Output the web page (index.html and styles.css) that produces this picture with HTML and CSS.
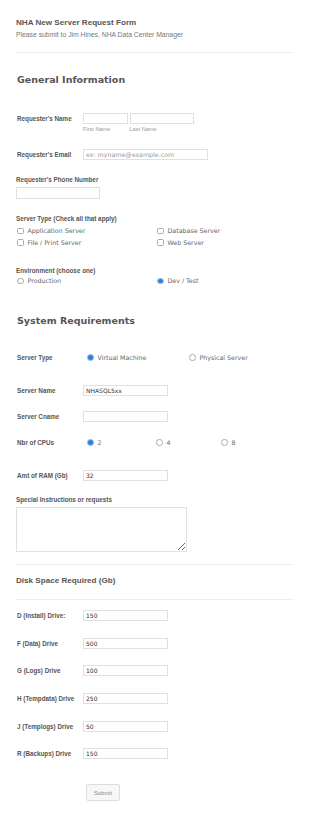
FILE: index.html
```html
<!DOCTYPE html>
<html>
<head>
  <meta charset="utf-8">
  <title>NHA New Server Request Form</title>
  <link rel="stylesheet" href="styles.css">
</head>
<body>
  <form class="form">
    <div class="form-header">
      <h1 class="form-title">NHA New Server Request Form</h1>
      <div class="form-subtitle">Please submit to Jim Hines, NHA Data Center Manager</div>
    </div>

    <h2 class="section-head head-general">General Information</h2>

    <div class="line line-left line-name">
      <label class="label-left">Requester's Name</label>
      <div class="name-fields">
        <span class="sub-field">
          <input class="input input-first" type="text">
          <span class="sub-label">First Name</span>
        </span>
        <span class="sub-field">
          <input class="input input-last" type="text">
          <span class="sub-label">Last Name</span>
        </span>
      </div>
    </div>

    <div class="line line-left line-email">
      <label class="label-left">Requester's Email</label>
      <input class="input input-email" type="text" placeholder="ex: myname@example.com">
    </div>

    <div class="line line-top line-phone">
      <label class="label-top">Requester's Phone Number</label>
      <input class="input input-phone" type="text">
    </div>

    <div class="line line-top line-type">
      <label class="label-top">Server Type (Check all that apply)</label>
      <div class="options two-col">
        <label class="option"><input type="checkbox" class="check"> Application Server</label>
        <label class="option"><input type="checkbox" class="check"> Database Server</label>
        <label class="option"><input type="checkbox" class="check"> File / Print Server</label>
        <label class="option"><input type="checkbox" class="check"> Web Server</label>
      </div>
    </div>

    <div class="line line-top line-env">
      <label class="label-top">Environment (choose one)</label>
      <div class="options two-col">
        <label class="option"><input type="radio" name="env" class="radio"> Production</label>
        <label class="option"><input type="radio" name="env" class="radio" checked> Dev / Test</label>
      </div>
    </div>

    <h2 class="section-head head-system">System Requirements</h2>

    <div class="line line-left line-vm">
      <label class="label-left">Server Type</label>
      <div class="options inline-opts">
        <label class="option opt-vm"><input type="radio" name="vm" class="radio" checked> Virtual Machine</label>
        <label class="option"><input type="radio" name="vm" class="radio"> Physical Server</label>
      </div>
    </div>

    <div class="line line-left line-sname">
      <label class="label-left">Server Name</label>
      <input class="input input-short" type="text" value="NHASQL5xx">
    </div>

    <div class="line line-left line-cname">
      <label class="label-left">Server Cname</label>
      <input class="input input-short" type="text">
    </div>

    <div class="line line-left line-cpu">
      <label class="label-left">Nbr of CPUs</label>
      <div class="options inline-opts">
        <label class="option opt-cpu"><input type="radio" name="cpu" class="radio" checked> 2</label>
        <label class="option opt-cpu"><input type="radio" name="cpu" class="radio"> 4</label>
        <label class="option"><input type="radio" name="cpu" class="radio"> 8</label>
      </div>
    </div>

    <div class="line line-left line-ram">
      <label class="label-left">Amt of RAM (Gb)</label>
      <input class="input input-short" type="text" value="32">
    </div>

    <div class="line line-top line-notes">
      <label class="label-top">Special Instructions or requests</label>
      <textarea class="textarea"></textarea>
    </div>

    <div class="divider"></div>
    <h3 class="sub-head">Disk Space Required (Gb)</h3>
    <div class="divider divider-disk"></div>

    <div class="drives">
      <div class="line line-left line-drive">
        <label class="label-left">D (Install) Drive:</label>
        <input class="input input-short" type="text" value="150">
      </div>
      <div class="line line-left line-drive">
        <label class="label-left">F (Data) Drive</label>
        <input class="input input-short" type="text" value="500">
      </div>
      <div class="line line-left line-drive">
        <label class="label-left">G (Logs) Drive</label>
        <input class="input input-short" type="text" value="100">
      </div>
      <div class="line line-left line-drive">
        <label class="label-left">H (Tempdata) Drive</label>
        <input class="input input-short" type="text" value="250">
      </div>
      <div class="line line-left line-drive">
        <label class="label-left">J (Templogs) Drive</label>
        <input class="input input-short" type="text" value="50">
      </div>
      <div class="line line-left line-drive">
        <label class="label-left">R (Backups) Drive</label>
        <input class="input input-short" type="text" value="150">
      </div>
    </div>

    <div class="buttons">
      <button type="button" class="submit">Submit</button>
    </div>
  </form>
</body>
</html>
```

FILE: styles.css
```css
html,
body {
  margin: 0;
  padding: 0;
  background: #fff;
}
body {
  font-family: "Liberation Sans", Arial, sans-serif;
  color: #555;
}
.form {
  width: 278px;
  padding: 0 16px 20px;
}
.form-header {
  padding-top: 18px;
  padding-bottom: 13px;
  border-bottom: 1px solid #eee;
}
.form-title {
  margin: 0;
  font-size: 8.1px;
  line-height: 10px;
  font-weight: bold;
  color: #555;
}
.form-subtitle {
  margin-top: 3px;
  font-size: 6.8px;
  line-height: 8px;
  color: #777;
}
.section-head {
  margin: 0;
  padding-left: 1px;
  font-family: "DejaVu Sans", Verdana, sans-serif;
  font-size: 9.5px;
  line-height: 12px;
  font-weight: bold;
  color: #555;
}
.head-general {
  margin-top: 21px;
}
.head-system {
  margin-top: 28px;
}

/* form lines */
.line {
  display: flex;
}
.line-left {
  align-items: flex-start;
  padding-left: 1px;
}
.line-top {
  flex-direction: column;
}
.label-left {
  width: 66px;
  flex: none;
  font-size: 6.3px;
  line-height: 9px;
  padding-top: 1px;
  font-weight: bold;
  color: #555;
}
.label-top {
  font-size: 6.3px;
  line-height: 9px;
  font-weight: bold;
  color: #555;
}
.input {
  box-sizing: border-box;
  height: 11px;
  margin: 0;
  padding: 0 0 0 2px;
  border: 1px solid #e0e0e0;
  border-radius: 0;
  background: #fff;
  font-family: "DejaVu Sans", Verdana, sans-serif;
  font-size: 6px;
  color: #333;
  outline: none;
}
.input::placeholder {
  color: #999;
  font-size: 6.3px;
}
.name-fields {
  display: flex;
  gap: 2px;
}
.sub-field {
  display: flex;
  flex-direction: column;
}
.input-first {
  width: 44.5px;
}
.input-last {
  width: 64px;
}
.sub-label {
  margin-top: 2px;
  font-size: 5.6px;
  line-height: 6px;
  color: #999;
}
.line-name {
  margin-top: 26.5px;
}
.line-email {
  margin-top: 17.5px;
}
.input-email {
  width: 124.5px;
}
.line-phone {
  margin-top: 15px;
}
.input-phone {
  width: 84px;
  height: 12px;
  margin-top: 2.5px;
}
.line-type {
  margin-top: 15px;
}
.options {
  font-family: "DejaVu Sans", Verdana, sans-serif;
  font-size: 6.3px;
  color: #666;
}
.two-col {
  display: grid;
  grid-template-columns: 140px 1fr;
  margin-top: 2.5px;
  padding-left: 1px;
}
.option {
  display: flex;
  align-items: center;
  height: 11.5px;
  gap: 4px;
}
.check,
.radio {
  appearance: none;
  box-sizing: border-box;
  width: 6.5px;
  height: 6.5px;
  margin: 0;
  flex: none;
  border: 0.7px solid #aaa;
  background: #fff;
}
.check {
  border-radius: 1.5px;
}
.radio {
  border-radius: 50%;
}
.radio:checked {
  border-color: #9cc4f0;
  background: #2f7fe0;
}
.line-env {
  margin-top: 17.5px;
}
.line-env .two-col {
  margin-top: 0.5px;
}

/* system requirements */
.line-vm {
  margin-top: 25.5px;
}
.line-vm .label-left,
.line-cpu .label-left {
  line-height: 11px;
  padding-top: 0;
}
.inline-opts {
  display: flex;
}
.inline-opts .option {
  height: 11px;
}
.opt-vm {
  width: 106px;
  padding-left: 4px;
  box-sizing: border-box;
}
.opt-cpu {
  width: 69px;
  padding-left: 4px;
  box-sizing: border-box;
}
.line-sname {
  margin-top: 21.5px;
}
.input-short {
  width: 84.5px;
}
.line-cname {
  margin-top: 15.5px;
}
.line-cpu {
  margin-top: 15px;
}
.line-ram {
  margin-top: 21.5px;
}
.line-notes {
  margin-top: 14.5px;
}
.textarea {
  box-sizing: border-box;
  width: 171px;
  height: 45px;
  margin: 2.5px 0 0;
  border: 1px solid #e0e0e0;
  resize: vertical;
  outline: none;
}

/* disk space */
.divider {
  height: 1px;
  background: #eee;
  margin-top: 12px;
}
.sub-head {
  margin: 11.5px 0 0;
  font-size: 8.1px;
  line-height: 10px;
  font-weight: bold;
  color: #555;
}
.divider-disk {
  margin-top: 12.5px;
}
.drives {
  display: flex;
  flex-direction: column;
  gap: 16.7px;
  margin-top: 10.5px;
}
.buttons {
  margin-top: 21.5px;
  padding-left: 70px;
}
.submit {
  box-sizing: border-box;
  width: 34px;
  height: 17px;
  margin: 0;
  padding: 0;
  border: 1px solid #ddd;
  border-radius: 2px;
  background: #f7f7f7;
  font-family: "Liberation Sans", Arial, sans-serif;
  font-size: 5.8px;
  color: #888;
}
```
